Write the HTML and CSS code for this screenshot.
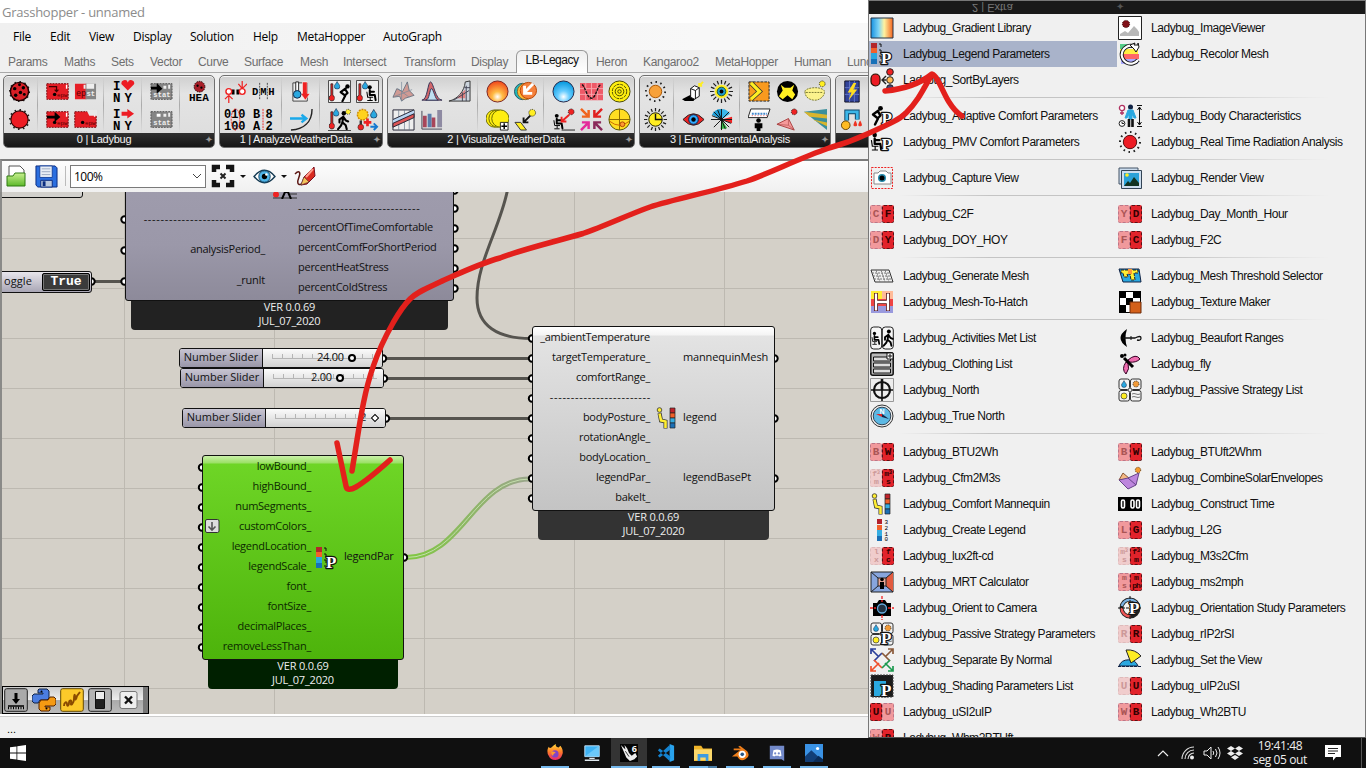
FILE: index.html
```html
<!DOCTYPE html>
<html lang="en">
<head>
<meta charset="utf-8">
<title>Grasshopper - unnamed</title>
<link rel="stylesheet" href="styles.css">
</head>
<body>
<svg class="defs" width="0" height="0">
  <defs>
    <radialGradient id="gOr" cx=".5" cy=".75" r=".7"><stop offset="0" stop-color="#fff"/><stop offset=".35" stop-color="#fb4"/><stop offset="1" stop-color="#f1501f"/></radialGradient>
    <radialGradient id="gBl" cx=".5" cy=".75" r=".7"><stop offset="0" stop-color="#fff"/><stop offset=".4" stop-color="#6cf"/><stop offset="1" stop-color="#0a9be0"/></radialGradient>
    <linearGradient id="gGrad"><stop offset="0" stop-color="#1590e0"/><stop offset=".35" stop-color="#7fd4f5"/><stop offset=".6" stop-color="#fff3a0"/><stop offset="1" stop-color="#f4641e"/></linearGradient>
    <linearGradient id="gWire" gradientUnits="userSpaceOnUse" x1="406" y1="0" x2="530" y2="0"><stop offset="0" stop-color="#80c840"/><stop offset="1" stop-color="#9ba58c"/></linearGradient>
    <linearGradient id="gFox" x1="0" y1="0" x2="0" y2="1"><stop offset="0" stop-color="#ffd83a"/><stop offset=".5" stop-color="#ff7a2a"/><stop offset="1" stop-color="#e8266f"/></linearGradient>
    <linearGradient id="gFolder" x1="0" y1="0" x2="0" y2="1"><stop offset="0" stop-color="#c9f08f"/><stop offset="1" stop-color="#5cb82a"/></linearGradient>
    <symbol id="sun" viewBox="0 0 24 24"><circle cx="12" cy="12" r="10" fill="none" stroke="#222" stroke-width="2" stroke-dasharray="1.6 3.6"/></symbol>
    <symbol id="drop" viewBox="0 0 8 10"><path d="M4 .5C5 3 7.3 4.500 7.300 6.500A3.300 3.100 0 0 1 .7 6.500C.7 4.500 3 3 4 .5Z" fill="#2aa8e0" stroke="#124" stroke-width=".7"/></symbol>
    <symbol id="therm" viewBox="0 0 6 20"><path d="M2 1h2v12a3 3 0 1 1-2 0Z" fill="#e22" stroke="#222" stroke-width=".8"/></symbol>
    <symbol id="walk" viewBox="0 0 14 20"><circle cx="8" cy="2.500" r="2.300"/><path d="M7.500 6L6.500 12L10 15L11 19M6.500 12L5 15.500L2 19M7 6.500L3.500 9V12M8 7L10 10L12.500 11" fill="none" stroke="#000" stroke-width="2.200" stroke-linecap="round"/></symbol>
    <symbol id="bend" viewBox="0 0 14 20"><circle cx="10.500" cy="2.800" r="2.400"/><path d="M8.500 5L3 9L8 13L5 19M8 6L10.500 10L8.500 12" fill="none" stroke="#000" stroke-width="2.400" stroke-linecap="round" stroke-linejoin="round"/></symbol>
    <symbol id="sit" viewBox="0 0 16 20"><circle cx="5" cy="2.600" r="2.400"/><path d="M5 6V12H11L12 18M6 8H10" fill="none" stroke="#000" stroke-width="2.400" stroke-linecap="round" stroke-linejoin="round"/><path d="M1.500 8L2.500 14.500H9M5.500 15V18M2 18.500H8.500" fill="none" stroke="#000" stroke-width="1.200"/></symbol>
    <symbol id="mannequin" viewBox="0 0 24 24"><circle cx="4.500" cy="4" r="2.300" fill="#fe3" stroke="#333" stroke-width=".8"/><path d="M4.500 7L6 14.500L10.500 15.500V22.500" fill="none" stroke="#333" stroke-width="4"/><path d="M4.500 7.500L6 14.500L10.500 15.500V22" fill="none" stroke="#fe3" stroke-width="2.600"/><g stroke="#222" stroke-width=".7"><path fill="#c1222a" d="M15 2h5v5h-5z"/><path fill="#f2602a" d="M15 7h5v5h-5z"/><path fill="#35aee2" d="M15 12h5v5h-5z"/><path fill="#1b6fb5" d="M15 17h5v5h-5z"/></g></symbol>
    <symbol id="legendP" viewBox="0 0 24 24"><path fill="#b3262a" d="M1 1h6v5H1z"/><path fill="#f2602a" d="M1 6h6v5H1z"/><path fill="#29a7df" d="M1 11h6v6H1z"/><path fill="#1670b8" d="M1 17h6v5H1z"/><path d="M9 2h2v3M9 8h2v3M9 14h2v3M9 20h2" stroke="#111" fill="none"/><text x="11" y="21.500" class="glyph-p">P</text></symbol>
    <symbol id="epw" viewBox="0 0 24 24"><path d="M.8 3.800h22.400v16.400H.8z" fill="#e61e26" stroke="#7c0d12" stroke-dasharray="2 1"/><path d="M21.500 5v4" stroke="#fff" stroke-width="1.500"/><circle cx="9" cy="15" r="1.800"/><text x="11.500" y="17.500" class="tiny-mono">epw</text></symbol>
    <symbol id="stat" viewBox="0 0 24 24"><path d="M1 3.800h22v16.400H1z" fill="#858585" stroke="#555" stroke-dasharray="2 1"/><path d="M14 6h3v3h-3zM19 5h2v4h-2z" fill="#eee"/><text x="3.500" y="17.500" class="stat-text">stat</text></symbol>
    <symbol id="grid4" viewBox="0 0 24 24"><g fill="#f4f4f4" stroke="#333"><rect x="1" y="1" width="10.500" height="10.500" rx="2"/><rect x="12.500" y="1" width="10.500" height="10.500" rx="2"/><rect x="1" y="12.500" width="10.500" height="10.500" rx="2"/><rect x="12.500" y="12.500" width="10.500" height="10.500" rx="2"/></g><use href="#drop" x="3" y="2" width="6" height="8"/><circle cx="18" cy="6" r="3" fill="#f19a38" stroke="#333" stroke-dasharray="1 1"/><circle cx="6" cy="18" r="3" fill="#fe2" stroke="#333" stroke-width=".7"/><path d="M14 16q2-1 4 0t4 0M14 19q2-1 4 0t4 0" stroke="#777" fill="none"/></symbol>
  </defs>
</svg>

<main class="screen">
<section class="window">
  <header class="titlebar">Grasshopper - unnamed</header>
  <nav class="menubar">
    <span style="width:37px">File</span><span style="width:39px">Edit</span><span style="width:44px">View</span><span style="width:57px">Display</span><span style="width:63px">Solution</span><span style="width:44px">Help</span><span style="width:86px">MetaHopper</span><span>AutoGraph</span>
  </nav>
  <nav class="tabs">
    <span style="width:56px">Params</span><span style="width:47px">Maths</span><span style="width:39px">Sets</span><span style="width:48px">Vector</span><span style="width:46px">Curve</span><span style="width:56px">Surface</span><span style="width:43px">Mesh</span><span style="width:61px">Intersect</span><span style="width:67px">Transform</span><span style="width:45px">Display</span>
    <b class="tab-on">LB-Legacy</b>
    <span style="width:47px">Heron</span><span style="width:72px">Kangaroo2</span><span style="width:79px">MetaHopper</span><span style="width:53px">Human</span><span>Lunchbox</span>
  </nav>
  <div class="ribbon">
    <section class="panel">
      <div class="panel-body">
        <div class="cells">
          <svg viewBox="0 0 24 24"><use href="#sun" width="24" height="24"/><circle cx="12" cy="12" r="9.500" fill="#d81f26" stroke="#200" stroke-width="1.500"/><circle cx="7" cy="9" r="1.800"/><circle cx="13" cy="13" r="1.800"/><circle cx="16" cy="8" r="1.800"/><circle cx="8" cy="16" r="1.800"/><circle cx="17" cy="15" r="1.500"/><circle cx="12" cy="5" r="1.500"/></svg>
          <svg viewBox="0 0 24 24"><use href="#sun" width="24" height="24"/><circle cx="12" cy="12" r="9" fill="#ed1c24" stroke="#300" stroke-width="1.200"/></svg>
        </div><i class="rule"></i>
        <div class="cells two">
          <svg viewBox="0 0 24 24"><use href="#epw" width="24" height="24"/><path d="M3 7h8v5m-2-2l2 2 2-2" fill="none" stroke="#400" stroke-width="1.300"/></svg>
          <svg viewBox="0 0 24 24"><path d="M1 4h12v16H1z" fill="#e61e26"/><path d="M12 4h11v16H12z" fill="#858585"/><path d="M13 4h8v5h-8zM10 5h2v4h-2z" fill="#eee"/><text x="2" y="17" class="tiny-mono big">ep</text><text x="13" y="17" class="stat-text">st</text></svg>
          <svg viewBox="0 0 24 24"><use href="#epw" width="24" height="24"/><path d="M1 8h8V4l6 5.500-6 5V11H1z"/></svg>
          <svg viewBox="0 0 24 24"><use href="#epw" width="24" height="24"/><path d="M13 2h11v6H16z" fill="#e8e8e8"/></svg>
        </div><i class="rule"></i>
        <div class="cells">
          <svg viewBox="0 0 24 24"><text x="1" y="10" class="slab">I</text><path d="M16.500 11L10 4.500A3.300 3.300 0 0 1 16.500 2.500A3.300 3.300 0 0 1 23 4.500Z" fill="#ed1c24"/><text x="1" y="22.500" class="slab">N</text><text x="13" y="22.500" class="slab">Y</text></svg>
          <svg viewBox="0 0 24 24"><text x="1" y="10" class="slab">I</text><path d="M10 4h6V1l7 5-7 5V8h-6z" fill="#ed1c24"/><text x="1" y="22.500" class="slab">N</text><text x="13" y="22.500" class="slab">Y</text></svg>
        </div><i class="rule"></i>
        <div class="cells">
          <svg viewBox="0 0 24 24"><use href="#stat" width="24" height="24"/><path d="M1 7h6V3l6 6-6 5v-4H1z"/></svg>
          <svg viewBox="0 0 24 24"><use href="#stat" width="24" height="24"/><path d="M7 6h4v3H7z" fill="#fff"/></svg>
        </div><i class="rule"></i>
        <div class="cells">
          <svg viewBox="0 0 24 24"><circle cx="12" cy="7" r="5.600" fill="#a81e28" stroke="#200" stroke-dasharray="1.500 1"/><circle cx="10" cy="6" r="1.200"/><circle cx="14" cy="8" r="1.200"/><text x="1" y="22" class="slab small">HEA</text></svg>
        </div>
      </div>
      <footer>0 | Ladybug<em>✦</em></footer>
    </section>
    <section class="panel">
      <div class="panel-body">
        <div class="cells two">
          <svg viewBox="0 0 24 24"><path d="M8 10h3v5H8zM13 10h3v5h-3z"/><circle cx="5" cy="12" r="3" fill="#fff" stroke="#e22" stroke-width="1.500"/><circle cx="19" cy="12" r="3" fill="#fff" stroke="#e22" stroke-width="1.500"/><path d="M5 16v8M5 16l-4 4M5 16l4 4M19 9V1M19 9l-4-5M19 9l5-5" stroke="#e22" fill="none" stroke-width="1.300"/></svg>
          <svg viewBox="0 0 24 24"><text x="0" y="16" class="slab mid">D</text><text x="8.500" y="16" class="slab mid">M</text><text x="17" y="16" class="slab mid">H</text><path d="M8 3v18M16 3v18" stroke="#222" stroke-width=".8" stroke-dasharray="2 1"/></svg>
          <svg viewBox="0 0 24 24"><text x="0" y="10.500" class="slab dig">010</text><text x="0" y="22.500" class="slab dig">100</text><ellipse cx="12" cy="12" rx="4.500" ry="11" fill="none" stroke="#e22" stroke-dasharray="2 1"/></svg>
          <svg viewBox="0 0 24 24"><text x="1" y="10.500" class="slab dig">B</text><text x="14" y="10.500" class="slab dig">8</text><text x="1" y="22.500" class="slab dig">A</text><text x="14" y="22.500" class="slab dig">2</text><path d="M11.500 1v22" stroke="#e22" stroke-dasharray="2 1"/></svg>
        </div><i class="rule"></i>
        <div class="cells">
          <svg viewBox="0 0 24 24"><path d="M3 3h15v19H3z" fill="#eee" stroke="#444"/><path d="M13 2h5v12h3l-5 7-5-7h2z" fill="#e22" stroke="#fff" stroke-width=".6"/><path d="M6 2h3v10H6z" fill="#fff" stroke="#222"/><circle cx="7.500" cy="15" r="4" fill="#2aa8e0" stroke="#124"/></svg>
          <svg viewBox="0 0 24 24"><path d="M0 11h15M12 7l5 4-5 4" stroke="#1ba9ea" stroke-width="2.500" fill="none"/><path d="M1 23C14 22 23 15 23 1" stroke="#222" stroke-width="1.500" fill="none"/></svg>
        </div><i class="rule"></i>
        <div class="cells two">
          <svg viewBox="0 0 24 24"><path d="M.5.500h23v23H.5z" fill="#eee" stroke="#444"/><use href="#therm" x="1" y="3" width="6" height="20"/><use href="#drop" x="6" y="1" width="7" height="9"/><use href="#bend" x="10" y="4" width="14" height="19"/></svg>
          <svg viewBox="0 0 24 24"><path d="M.5.500h23v23H.5z" fill="#eee" stroke="#444"/><use href="#therm" x="1" y="3" width="6" height="20"/><use href="#drop" x="6" y="1" width="7" height="9"/><use href="#sit" x="10" y="5" width="14" height="18"/></svg>
          <svg viewBox="0 0 24 24"><path d="M0 23.500h24" stroke="#444"/><use href="#therm" x="1" y="3" width="6" height="20"/><use href="#drop" x="5" y="0" width="7" height="9"/><circle cx="21" cy="4" r="2.600" fill="#fe3" stroke="#333" stroke-dasharray="1 1"/><use href="#walk" x="8" y="3" width="15" height="20"/></svg>
          <svg viewBox="0 0 24 24"><circle cx="7" cy="7" r="5.500" fill="#ffd21e" stroke="#c80" stroke-width="1.500" stroke-dasharray="2 1"/><use href="#drop" x="14" y="1" width="9" height="10"/><path d="M12 11v8M8 15h8" stroke="#e22" stroke-width="2.800"/><path d="M5 13v6" stroke="#333" stroke-width="2.500"/><circle cx="5" cy="20" r="3" fill="#e22" stroke="#333" stroke-width=".6"/><path d="M15 19.500h6m-2.500-3.500l3.500 3.500-3.500 3.500" stroke="#1578d0" stroke-width="2" fill="none"/></svg>
        </div>
      </div>
      <footer>1 | AnalyzeWeatherData<em>✦</em></footer>
    </section>
    <section class="panel">
      <div class="panel-body">
        <div class="cells three">
          <svg viewBox="0 0 24 24"><path d="M1 18L5 9l6 3 5-10 2 9 5 5-9 3-4 3-2-5z" fill="#cf9a94" stroke="#567" stroke-width=".8"/><path d="M10 2v20M3 17l18-7M6 9l12 9" stroke="#789" stroke-width=".7"/></svg>
          <svg viewBox="0 0 24 24"><path d="M2 21C8 21 8 2 11 2S16 21 23 21z" fill="#d2666a" stroke="#335"/><path d="M6 21C10 21 10 9 12 9S16 21 19 21z" fill="#bfe0f2" stroke="#335"/></svg>
          <svg viewBox="0 0 24 24"><path d="M1 22C10 20 17 12 18 2L23 1V22Z" fill="#ccd4dd" stroke="#333"/><path d="M9 19l9-9v9z" fill="#e08080"/><path d="M15 13v9M19 6v16M6 21l16-10M17 8h6" stroke="#445"/></svg>
          <svg viewBox="0 0 24 24"><path d="M1 2h22v21H1z" fill="#eee" stroke="#223"/><path d="M7 2v21M13 2v21M18 2v21" stroke="#678" stroke-width=".7"/><path d="M1 12L23 2v4L1 16z" fill="#b9d4f0"/><path d="M1 16L23 6v4L1 20z" fill="#d55" stroke="#223"/><path d="M1 12L23 2" stroke="#223"/></svg>
          <svg viewBox="0 0 24 24"><path d="M2 3v19h21" stroke="#445" fill="none"/><path fill="#a8455a" d="M3 8h4v12H3zM12 10h4v10h-4z"/><path fill="#5b7dab" d="M8 6h4v14H8z"/><path fill="#8e8aa2" d="M18 2h5v18h-5z"/></svg>
        </div><i class="rule"></i>
        <div class="cells two">
          <svg viewBox="0 0 24 24"><circle cx="12" cy="12" r="11" fill="url(#gOr)" stroke="#722"/></svg>
          <svg viewBox="0 0 24 24"><circle cx="9" cy="12" r="8.500" fill="#2bb" stroke="#256"/><circle cx="12" cy="12" r="8.500" fill="#fb3" stroke="#863"/><circle cx="15" cy="11" r="8.500" fill="#f4803c" stroke="#b40"/><path d="M20 4L12 12M11 6v8h8" stroke="#fff" stroke-width="3" fill="none"/></svg>
          <svg viewBox="0 0 24 24"><g fill="#fe1" stroke="#660"><circle cx="9" cy="11" r="9"/><circle cx="12" cy="11" r="9"/><circle cx="15" cy="11" r="9"/></g><path d="M15 15h8v8h-8z" fill="#fff" stroke="#222"/><path d="M19 16v6M16 19h6" stroke="#000" stroke-width="1.500"/></svg>
          <svg viewBox="0 0 24 24"><path d="M1 15h6l6 8H7z" fill="#fe2" stroke="#333"/><circle cx="19" cy="5" r="3.500" fill="#fe2" stroke="#222" stroke-dasharray="1 1"/><path d="M17 8l-7 7m0-5v5h5" stroke="#111" stroke-width="2" fill="none"/></svg>
        </div><i class="rule"></i>
        <div class="cells three">
          <svg viewBox="0 0 24 24"><circle cx="12" cy="12" r="11" fill="url(#gBl)" stroke="#224"/></svg>
          <svg viewBox="0 0 24 24"><path d="M0 3h24v18H0z" fill="#ee5a68"/><path d="M0 9h24M0 15h24M6 3v18M12 3v18M18 3v18" stroke="#f9a3aa"/><path d="M2 5c3 0 5 14 10 14s6-14 10-14" fill="none" stroke="#111" stroke-width="1.400" stroke-dasharray="3 1"/></svg>
          <svg viewBox="0 0 24 24"><circle cx="12" cy="12" r="11" fill="#fe1" stroke="#440"/><circle cx="12" cy="12" r="7.500" fill="none" stroke="#440" stroke-dasharray="3 1"/><circle cx="12" cy="12" r="4.500" fill="none" stroke="#440"/><circle cx="12" cy="12" r="1.800" fill="none" stroke="#440"/></svg>
          <svg viewBox="0 0 24 24"><use href="#sit" x="0" y="6" width="15" height="17"/><path d="M18 7l-8 7m0-5v5h5" stroke="#e22" stroke-width="2" fill="none"/><circle cx="20" cy="4" r="3" fill="#e22" stroke="#222" stroke-dasharray="1 1"/><path d="M10 23h14" stroke="#222"/></svg>
          <svg viewBox="0 0 24 24"><g fill="none" stroke-width="2.600"><path d="M1 1l8 8M2 9h7V2" stroke="#f0641e"/><path d="M23 1l-8 8M15 2v7h7" stroke="#e02020"/><path d="M1 23l8-8M2 15h7v7" stroke="#e42a9a"/><path d="M23 23l-8-8M15 22v-7h7" stroke="#8a2a5a"/></g></svg>
          <svg viewBox="0 0 24 24"><circle cx="12" cy="12" r="11" fill="#fd2" stroke="#550"/><path d="M12 1v22M1 12h22" stroke="#860"/><path d="M2 14q10 8 20 0" fill="none" stroke="#c60"/><circle cx="15" cy="17" r="2.500" fill="#f93" stroke="#a40"/></svg>
        </div>
      </div>
      <footer>2 | VisualizeWeatherData<em>✦</em></footer>
    </section>
    <section class="panel">
      <div class="panel-body">
        <div class="cells">
          <svg viewBox="0 0 24 24"><use href="#sun" width="24" height="24"/><circle cx="12" cy="12" r="6.500" fill="#f7a13a" stroke="#a50"/></svg>
          <svg viewBox="0 0 24 24"><g stroke="#222" stroke-width="1.300"><path d="M12 0v24M0 12h24M3.500 3.500l17 17M20.500 3.500l-17 17M7.500 1l9 22M16.500 1l-9 22M1 7.500l22 9M1 16.500l22-9"/></g><circle cx="12" cy="12" r="8.500" fill="#dcdcdc"/><circle cx="12" cy="12" r="7" fill="#fe2" stroke="#220"/><path d="M12 6v6h7" stroke="#111" stroke-width="1.500" fill="none"/></svg>
        </div><i class="rule"></i>
        <div class="cells two">
          <svg viewBox="0 0 24 24"><path d="M0 20l8-4h8l-4 6H3z"/><path d="M9 9l4-3 5 2v9l-5 3-4-2zM9 9l5 2v9M14 11l4-3" fill="#fff" stroke="#111"/><path d="M22 2l-4 4m0-3v3h3" stroke="#fe2" stroke-width="2" fill="none"/></svg>
          <svg viewBox="0 0 24 24"><g stroke="#222" stroke-width="1.300"><path d="M12 0v24M0 12h24M3.500 3.500l17 17M20.500 3.500l-17 17M7.500 1l9 22M16.500 1l-9 22M1 7.500l22 9M1 16.500l22-9"/></g><circle cx="12" cy="12" r="7.500" fill="#fe2" stroke="#dcdcdc"/><circle cx="12" cy="12" r="4.500" fill="#1b9ad0" stroke="#252"/><circle cx="12" cy="12" r="2"/></svg>
          <svg viewBox="0 0 24 24"><path d="M1 12Q12 0 23 12Q12 24 1 12z" fill="#e22" stroke="#222"/><circle cx="12" cy="12" r="5" fill="#3af" stroke="#024"/><circle cx="12" cy="12" r="2.300"/></svg>
          <svg viewBox="0 0 24 24"><path d="M12 12L2 7A11 11 0 0 1 12 1z" fill="#1e9fd8"/><path d="M12 12V1a11 11 0 0 1 9 5z" fill="#3bb6e8"/><path d="M12 12l11-3v7z" fill="#e22"/><path d="M12 12l6 9-7 1z" fill="#3b4"/><path d="M12 1v22M1 12h22M4 4l16 16M20 4L4 20M8 2l8 20M2 8l20 8" stroke="#111" stroke-width="1"/></svg>
        </div><i class="rule"></i>
        <div class="cells three">
          <svg viewBox="0 0 24 24"><path d="M1 2h21v20H1z" fill="#f99a1e" stroke="#222" stroke-dasharray="3 1"/><path d="M3 3l9 9-9 8" fill="none" stroke="#333" stroke-width="5"/><path d="M3 3l9 9-9 8" fill="none" stroke="#fe2" stroke-width="3.400"/></svg>
          <svg viewBox="0 0 24 24"><circle cx="12" cy="12" r="11"/><path d="M5 5l4 3h6l4-3-2 6 3 4-3 5-5-4-5 4-4-3 4-6z" fill="#fe2"/></svg>
          <svg viewBox="0 0 24 24"><path d="M1 12c0-4 16-6 20-1 2 4-4 11-11 10S1 16 1 12z" fill="#fbf28c" stroke="#773" stroke-dasharray="2 1"/><path d="M2 13h18" stroke="#773" stroke-dasharray="2 1"/><circle cx="19" cy="4" r="3" fill="#fe2" stroke="#222" stroke-dasharray="1 1"/></svg>
          <svg viewBox="0 0 24 24"><path d="M3 1h20l-3 9H0z" fill="#fff" stroke="#222"/><path d="M4 6h16" stroke="#48c" stroke-dasharray="2 1" stroke-width="2"/><path d="M4 8h16" stroke="#e55" stroke-dasharray="1 2"/><circle cx="11" cy="13" r="2.400"/><path d="M7 16h8v5h-2v3H9v-3H7z"/></svg>
          <svg viewBox="0 0 24 24"><path d="M1 17L13 11l6 12z" fill="#f59a9a" stroke="#a44"/><path d="M1 17l12 1v-7M13 18l6 5" stroke="#a44" stroke-width=".6" fill="none"/><circle cx="19" cy="4" r="3" fill="#e22" stroke="#222" stroke-dasharray="1 1"/></svg>
          <svg viewBox="0 0 24 24"><path d="M0 4L24 1V23z" fill="#3b8f9c"/><path d="M0 4l24 3v4L6 9zM9 12l15 3v4z" fill="#d9b52e"/></svg>
        </div>
      </div>
      <footer>3 | EnvironmentalAnalysis<em>✦</em></footer>
    </section>
    <section class="panel cut">
      <div class="panel-body">
        <div class="cells">
          <svg viewBox="0 0 24 24"><path d="M5 1h15v22H5z" fill="#33449a" stroke="#112"/><path d="M10 1v22M15 1v22M5 8h15M5 15h15" stroke="#6477c8"/><path d="M14 3L8 13h4l-3 8 9-11h-4l3-7z" fill="#fd2"/></svg>
          <svg viewBox="0 0 24 24"><path d="M7 13V4h11v8" fill="none" stroke="#146" stroke-width="5"/><path d="M7 13V4h11v8" fill="none" stroke="#3bb6e8" stroke-width="3"/><circle cx="6" cy="18" r="4.500" fill="#fb2" stroke="#640"/><path d="M16 13c3 5 2 6 0 6s-3-1 0-6M21 13c3 5 2 6 0 6s-3-1 0-6" fill="#e32"/></svg>
        </div>
      </div>
      <footer></footer>
    </section>
  </div>
  <div class="toolbar">
    <svg class="tool-open" viewBox="0 0 20 24"><path d="M3 2h11l4 4v8H3z" fill="#fff" stroke="#555"/><path d="M1 12h6l2-3h10v13H1z" fill="url(#gFolder)" stroke="#2f7a12"/></svg>
    <svg class="tool-save" viewBox="0 0 24 24"><path d="M1 1h20l2 2v20H3l-2-2z" fill="#2b6fe0" stroke="#0a2c80"/><path d="M5 1h13v12H5z" fill="#e9eef5" stroke="#1744a0"/><path d="M7 4h9M7 7h9M7 10h9" stroke="#9aa8c0"/><path d="M6 16h12v7H6z" fill="#b9c7de" stroke="#0a2c80"/><path d="M8 17h3v5H8z" fill="#0a2c80"/></svg>
    <i class="tool-rule"></i>
    <div class="zoom-box"><span>100%</span><svg viewBox="0 0 10 6"><path d="M1 1l4 4 4-4" fill="none" stroke="#444"/></svg></div>
    <svg class="tool-fit" viewBox="0 0 24 24"><path d="M3 8V3h6M15 3h6v5M21 16v5h-6M9 21H3v-5" fill="none" stroke="#151515" stroke-width="4.500"/><path d="M9.500 9.500l5 5M14.500 9.500l-5 5" stroke="#222" stroke-width="2"/></svg>
    <i class="caret"></i>
    <svg class="tool-eye" viewBox="0 0 24 20"><path d="M1 10Q12-3 23 10Q12 23 1 10z" fill="#fff" stroke="#143a52" stroke-width="1.500"/><circle cx="12" cy="10" r="6" fill="#4fb4e8" stroke="#0d4468"/><circle cx="12" cy="10" r="2.800"/><circle cx="14" cy="8" r="1.300" fill="#fff"/></svg>
    <i class="caret"></i>
    <svg class="tool-pen" viewBox="0 0 22 22"><path d="M1 9c4-4 6-2 4 3s-2 9 3 7" fill="none" stroke="#5b1612" stroke-width="1.500"/><path d="M7 20l3-8L20 2l1 9-8 8z" fill="#d92b20" stroke="#712"/><path d="M12 12l7-8" stroke="#ff9b8a" stroke-width="2"/><path d="M7 20l3-8 5 5z" fill="#f5c35b" stroke="#533" stroke-width=".6"/></svg>
  </div>

  <div class="canvas">
    <svg class="wires" viewBox="0 192 868 522">
      <g class="wire">
        <path d="M92 281.500H123M384 358.500H530M385 378.500H530M387 418.500H530"/>
        <path d="M507.500 190C500 228 477 262 477 298C477 326 498 338.500 531 338.500"/>
      </g>
      <path d="M406 557.500C462 557.500 474 479 530 479" fill="none" stroke="url(#gWire)" stroke-width="5"/>
      <path d="M406 557.500C462 557.500 474 479 530 479" fill="none" stroke="#c5e0ad" stroke-width="1"/>
      <g class="ports">
        <circle cx="124.500" cy="219.500" r="3.200"/><circle cx="124.500" cy="250.500" r="3.200"/><circle cx="124.500" cy="281.500" r="3.200"/><circle cx="91.500" cy="281.500" r="3.200"/>
        <circle cx="454.500" cy="190.500" r="3.200"/><circle cx="454.500" cy="208.500" r="3.200"/><circle cx="454.500" cy="228.500" r="3.200"/><circle cx="454.500" cy="248.500" r="3.200"/><circle cx="454.500" cy="268.500" r="3.200"/><circle cx="454.500" cy="288.500" r="3.200"/>
        <circle cx="383" cy="358.500" r="3.200"/><circle cx="384" cy="378.500" r="3.200"/><circle cx="386" cy="418.500" r="3.200"/>
        <circle cx="532" cy="338.500" r="3.200"/><circle cx="532" cy="358.500" r="3.200"/><circle cx="532" cy="378.500" r="3.200"/><circle cx="532" cy="398.500" r="3.200"/><circle cx="532" cy="418.500" r="3.200"/><circle cx="532" cy="438.500" r="3.200"/><circle cx="532" cy="458.500" r="3.200"/><circle cx="532" cy="478.500" r="3.200"/><circle cx="532" cy="498.500" r="3.200"/>
        <circle cx="774.500" cy="358.500" r="3.200"/><circle cx="774.500" cy="418.500" r="3.200"/><circle cx="774.500" cy="478.500" r="3.200"/>
        <circle cx="202" cy="467.500" r="3.200"/><circle cx="202" cy="487.500" r="3.200"/><circle cx="202" cy="507.500" r="3.200"/><circle cx="202" cy="527.500" r="3.200"/><circle cx="202" cy="547.500" r="3.200"/><circle cx="202" cy="567.500" r="3.200"/><circle cx="202" cy="587.500" r="3.200"/><circle cx="202" cy="607.500" r="3.200"/><circle cx="202" cy="627.500" r="3.200"/><circle cx="202" cy="647.500" r="3.200"/>
        <circle cx="404" cy="557.500" r="3.200"/>
      </g>
    </svg>

    <article class="node stub"></article>
    <article class="node toggle"><span>oggle</span><b>True</b></article>

    <article class="node comfort">
      <div class="inputs"><p class="dash">-----------------------------</p><p>analysisPeriod_</p><p>_runIt</p></div>
      <svg class="half-icon" viewBox="0 0 24 7"><circle cx="3" cy="2.500" r="3" fill="#e22"/><path d="M0 6h24M17 2h7" stroke="#333"/><path d="M9 7l3-7h3l3 7" fill="none" stroke="#000" stroke-width="2"/></svg>
      <div class="outputs"><p class="dash">-----------------------------</p><p>percentOfTimeComfortable</p><p>percentComfForShortPeriod</p><p>percentHeatStress</p><p>percentColdStress</p></div>
    </article>
    <footer class="ver ver-comfort">VER 0.0.69<br>JUL_07_2020</footer>

    <article class="node slider s1"><b>Number Slider</b><div class="track"><span>24.00</span><i class="knob"></i></div></article>
    <article class="node slider s2"><b>Number Slider</b><div class="track"><span>2.00</span><i class="knob"></i></div></article>
    <article class="node slider s3"><b>Number Slider</b><div class="track"><span>2</span><i class="knob diamond"></i></div></article>

    <article class="node mannequin">
      <div class="inputs"><p>_ambientTemperature</p><p>targetTemperature_</p><p>comfortRange_</p><p class="dash">------------------------</p><p>bodyPosture_</p><p>rotationAngle_</p><p>bodyLocation_</p><p>legendPar_</p><p>bakeIt_</p></div>
      <svg class="node-icon" viewBox="0 0 24 24"><use href="#mannequin" width="24" height="24"/></svg>
      <div class="outputs"><p>mannequinMesh</p><p>legend</p><p>legendBasePt</p></div>
    </article>
    <footer class="ver ver-mannequin">VER 0.0.69<br>JUL_07_2020</footer>

    <article class="node legend">
      <div class="inputs"><p>lowBound_</p><p>highBound_</p><p>numSegments_</p><p>customColors_</p><p>legendLocation_</p><p>legendScale_</p><p>font_</p><p>fontSize_</p><p>decimalPlaces_</p><p>removeLessThan_</p></div>
      <svg class="node-icon" viewBox="0 0 24 24"><use href="#legendP" width="24" height="24"/></svg>
      <div class="outputs"><p>legendPar</p></div>
      <svg class="flatten" viewBox="0 0 15 15"><rect x=".5" y=".5" width="13.500" height="13" rx="1.500" fill="#ddd" stroke="#333"/><path d="M7 3v8M3.500 7.500L7 11l3.500-3.500" fill="none" stroke="#555" stroke-width="1.600"/></svg>
    </article>
    <footer class="ver ver-legend">VER 0.0.69<br>JUL_07_2020</footer>

    <div class="palette">
      <svg viewBox="0 0 24 24"><rect x=".7" y=".7" width="22.600" height="22.600" rx="2" fill="#aaa" stroke="#222"/><path d="M12 5v6" stroke="#000" stroke-width="3"/><path d="M8 11h8l-4 5z"/><path d="M4 18h16" stroke="#000" stroke-width="1.500"/><path d="M4 20h17" stroke="#000" stroke-width="2.500" stroke-dasharray="1 1.500"/></svg>
      <svg viewBox="0 0 24 24"><path d="M7 1h8l2 2v7l-2 2H8l-2 3H2L0 13V8l2-2h9V5H6V2z" fill="#4b7de0" stroke="#124"/><path d="M17 23H9l-2-2v-6l2-3h7l2-3h4l2 2v5l-2 2h-9v1h5v3z" fill="#f59a13" stroke="#520"/><circle cx="9.500" cy="3.500" r="1"/><circle cx="14.500" cy="20.500" r="1"/></svg>
      <svg viewBox="0 0 24 24"><rect x=".7" y=".7" width="22.600" height="22.600" rx="2" fill="#fcc92a" stroke="#664a00"/><path d="M4 18c0-4 3-5 3-2s2 2 2-1 3-4 2 0 3 0 3-4 1-6 1-2 1 3 2-1l3-4" fill="none" stroke="#8a4b00" stroke-width="1.900"/></svg>
      <svg viewBox="0 0 24 24"><rect x=".7" y=".7" width="22.600" height="22.600" rx="2" fill="#b5b5b5" stroke="#222"/><path d="M7.500 3.500h9v17h-9z" fill="#eee" stroke="#111"/><path d="M8 11h8v9H8z" fill="#222"/></svg>
      <svg viewBox="0 0 24 24"><rect x="4" y="3.500" width="17" height="17" rx="2" fill="#eee" stroke="#777"/><path d="M9 8.500l7 7M16 8.500l-7 7" stroke="#111" stroke-width="2.400"/></svg>
    </div>
  </div>
  <div class="status">...</div>
</section>

<aside class="popup">
  <header><span>2 | Extra</span><em>✦</em></header>
  <div class="group">
    <p><svg viewBox="0 0 24 24"><path d="M1 2h22v20H1z" fill="url(#gGrad)" stroke="#234"/></svg>Ladybug_Gradient Library</p>
    <p><svg viewBox="0 0 24 24"><path d="M.5.500h23v23H.5z" fill="#fff" stroke="#222"/><circle cx="8" cy="8" r="3.600" fill="#801018" stroke="#300" stroke-dasharray="1 1"/><path d="M2 20v-2l5-3 3 2 6-7 3 3 2 3v4z" fill="#b8b8b8"/></svg>Ladybug_ImageViewer</p>
    <p class="hot"><svg viewBox="0 0 24 24"><use href="#legendP" width="24" height="24"/></svg>Ladybug_Legend Parameters</p>
    <p><svg viewBox="0 0 24 24"><path fill="#5c8" d="M2 2h7v6H2z"/><path fill="#fe4" d="M2 7h18v6H2z"/><path fill="#f66" d="M4 12h17v5H4z"/><path fill="#aaf" d="M3 17h17v5H3z"/><path d="M20 18A9 9 0 1 1 15 4" fill="none" stroke="#111" stroke-width="4"/><path d="M20 18A9 9 0 1 1 15 4" fill="none" stroke="#fff" stroke-width="2.200"/><path d="M12 3l5-2-1 2h4V1l1 4-3 5-2-3z" fill="#fff" stroke="#111"/></svg>Ladybug_Recolor Mesh</p>
    <p><svg viewBox="0 0 24 24"><rect x="1" y="6" width="9" height="12" rx="4.500" fill="#ed1c24" stroke="#210" stroke-width="1.200"/><path d="M16 8l-4 4 4 4M12 12h4" stroke="#222" stroke-width="1.400" fill="none"/><circle cx="20" cy="4" r="3.300" fill="#e22" stroke="#222"/><circle cx="20" cy="12" r="3.300" fill="#fb5" stroke="#222"/><circle cx="20" cy="20" r="3.300" fill="#447" stroke="#222"/></svg>Ladybug_SortByLayers</p>
  </div>
  <div class="group">
    <p><svg viewBox="0 0 24 24"><use href="#bend" x="0" y="0" width="14" height="23"/><text x="11.500" y="20" class="glyph-p">P</text></svg>Ladybug_Adaptive Comfort Parameters</p>
    <p><svg viewBox="0 0 24 24"><circle cx="12.500" cy="3" r="2.500" fill="#124"/><path d="M10 6h5l3 8h-2l-2-4v5h-3v-5l-2 4H7z" fill="#29a7df" stroke="#29a7df"/><path d="M11 15v8M14.500 15v8" stroke="#111" stroke-width="2.600"/><path d="M19 1.500h5M19 22.500h5M21.500 3v18M19.500 6l2-3 2 3M19.500 18l2 3 2-3" stroke="#111" fill="none"/><circle cx="4" cy="4" r="2.600" fill="#fff" stroke="#b03060" stroke-width="1.300"/><path d="M4 7v4M2 9h4" stroke="#b03060" stroke-width="1.300"/><circle cx="4" cy="19.500" r="2.900" fill="#fff" stroke="#222"/><path d="M4 18v1.500h2" stroke="#222" fill="none"/></svg>Ladybug_Body Characteristics</p>
    <p><svg viewBox="0 0 24 24"><use href="#sit" x="0" y="1" width="15" height="22"/><text x="11.500" y="20" class="glyph-p">P</text></svg>Ladybug_PMV Comfort Parameters</p>
    <p><svg viewBox="0 0 24 24"><use href="#sun" width="24" height="24"/><circle cx="12" cy="12" r="6.700" fill="#ed1c24" stroke="#511"/></svg>Ladybug_Real Time Radiation Analysis</p>
  </div>
  <div class="group">
    <p><svg viewBox="0 0 24 24"><path d="M1.500 1.500h21v21h-21z" fill="none" stroke="#e22" stroke-dasharray="2 1.200"/><path d="M4 7h4l2-2h6l2 2h3v11H4z" fill="#fff" stroke="#888"/><circle cx="12" cy="12" r="4" fill="#28a"/><circle cx="12" cy="12" r="2.500"/></svg>Ladybug_Capture View</p>
    <p><svg viewBox="0 0 24 24"><path d="M1 2h19v16H1z" fill="#cde" stroke="#456"/><path d="M3.500 4.500h20v18h-20z" fill="#cde" stroke="#345"/><path d="M6 7h15v13H6z" fill="#2aa2d8"/><path d="M6 20l4-5 2 2 4-6 5 6v3z" fill="#132"/><circle cx="9" cy="9" r="1.800" fill="#fe2"/></svg>Ladybug_Render View</p>
  </div>
  <div class="group">
    <p><span class="conv"><i>C</i><b>F</b></span>Ladybug_C2F</p>
    <p><span class="conv"><i>Y</i><b>D</b></span>Ladybug_Day_Month_Hour</p>
    <p><span class="conv"><i>D</i><b>Y</b></span>Ladybug_DOY_HOY</p>
    <p><span class="conv"><i>F</i><b>C</b></span>Ladybug_F2C</p>
  </div>
  <div class="group">
    <p><svg viewBox="0 0 24 24"><path d="M1 6h18l4 12H5z" fill="#eee" stroke="#333"/><path d="M2 9h18M3 12h18M4 15h18M6 6l4 12M11 6l4 12M15 6l4 12" stroke="#777" stroke-dasharray="2 1"/></svg>Ladybug_Generate Mesh</p>
    <p><svg viewBox="0 0 24 24"><path d="M1 5h20l2 13H5z" fill="#2aa8e0" stroke="#124"/><path d="M3 6h17v3h-4l1 7h-4l-1-6H9l1 3H6L5 9H3z" fill="#fe3" stroke="#222" stroke-dasharray="3 1"/><path d="M10 5h4v5h-4z" fill="#f93"/></svg>Ladybug_Mesh Threshold Selector</p>
    <p><svg viewBox="0 0 24 24"><path fill="#fe3" d="M1 1h11v8H1z"/><path fill="#fb9" d="M12 1h11v8H12z"/><path fill="#e44" d="M1 9h22v7H1z"/><path fill="#99d" d="M1 16h22v7H1z"/><path d="M6 3v18M18 3v18M6 12h12" stroke="#511" stroke-width="4"/><path d="M6 3.500v17M18 3.500v17M6 12h12" stroke="#fff" stroke-width="2.400"/></svg>Ladybug_Mesh-To-Hatch</p>
    <p><svg viewBox="0 0 24 24"><path d="M1 1h22v22H1z"/><path d="M8 2h7v6H8zM2 8h6v7H2zM15 8h7v5h-7zM8 15h4v7H8z" fill="#fff"/><path d="M12 12h11v11H12z" fill="#d4601a" stroke="#6d2a08"/></svg>Ladybug_Texture Maker</p>
  </div>
  <div class="group">
    <p><svg viewBox="0 0 24 24"><rect x=".7" y="1" width="11" height="22" rx="3" fill="#f6f6f6" stroke="#222"/><rect x="12.300" y="1" width="11" height="22" rx="3" fill="#f6f6f6" stroke="#222"/><use href="#sit" x="1" y="5" width="11" height="15"/><use href="#walk" x="12" y="3" width="12" height="18"/></svg>Ladybug_Activities Met List</p>
    <p><svg viewBox="0 0 24 24"><path d="M9 3Q-4 12 9 21Q6 12 9 3z"/><path d="M5 12h12q6-3 6 0t-4 2" stroke="#111" stroke-width="1.300" fill="none"/><path d="M13 10v4" stroke="#111"/></svg>Ladybug_Beaufort Ranges</p>
    <p><svg viewBox="0 0 24 24"><rect x=".8" y=".8" width="22.400" height="22.400" rx="2" fill="#b9b9b9" stroke="#111" stroke-width="1.500"/><path d="M3.500 5h17v4h-17zM3.500 11h17v4h-17zM3.500 17h17v4h-17z" fill="#ddd" stroke="#111"/><path d="M17 1h6v6h-6z" fill="#fff" stroke="#111"/><path d="M20 2v4M18 4h4" stroke="#111"/></svg>Ladybug_Clothing List</p>
    <p><svg viewBox="0 0 24 24"><path d="M10 8Q18 1 22 7Q18 11 11 10z" fill="#ee6cae" stroke="#302"/><path d="M8 10Q3 17 8 22Q12 17 10 11z" fill="#ee6cae" stroke="#302"/><path d="M6 6l9 9" stroke="#000" stroke-width="3"/><circle cx="4" cy="4" r="2"/><circle cx="7" cy="3" r="1.500"/></svg>Ladybug_fly</p>
    <p><svg viewBox="0 0 24 24"><path d="M.5.500h23v23H.5z" fill="#eee" stroke="#999"/><circle cx="12" cy="12" r="8" fill="none" stroke="#111" stroke-width="2.200"/><path d="M12 1v22M1 12h22" stroke="#111" stroke-width="1.600"/><path d="M12 1v11" stroke="#111" stroke-width="2.600"/></svg>Ladybug_North</p>
    <p><svg viewBox="0 0 24 24"><use href="#grid4" width="24" height="24"/></svg>Ladybug_Passive Strategy List</p>
    <p><svg viewBox="0 0 24 24"><circle cx="12" cy="12" r="11" fill="#eee" stroke="#333"/><circle cx="12" cy="12" r="8.800" fill="#5db9e4" stroke="#345"/><path d="M6 10l6 0 0 3z" fill="#d22"/><path d="M12 10l7 5-7-2z" fill="#124"/><text x="9.500" y="10" class="compass-n">N</text></svg>Ladybug_True North</p>
  </div>
  <div class="group">
    <p><span class="conv"><i>B</i><b>W</b></span>Ladybug_BTU2Wh</p>
    <p><span class="conv"><i>B</i><b>W</b></span>Ladybug_BTUft2Whm</p>
    <p><span class="conv pale"><i class="stack">f³<br>m</i><b class="stack">m³<br>s</b></span>Ladybug_Cfm2M3s</p>
    <p><svg viewBox="0 0 24 24"><path d="M1 14L5 7l7 6z" fill="#f5b883" stroke="#853"/><path d="M1 14l9-2 11-5-3 12-8 4z" fill="#bd86dd" stroke="#648"/><path d="M10 12l8 7" stroke="#648"/><circle cx="20" cy="4" r="2.700" fill="#f49a2e" stroke="#531" stroke-dasharray="1 1"/></svg>Ladybug_CombineSolarEnvelopes</p>
    <p><svg viewBox="0 0 24 24"><use href="#mannequin" width="24" height="24"/></svg>Ladybug_Comfort Mannequin</p>
    <p><svg viewBox="0 0 24 24"><path d="M0 5h24v14H0z"/><g fill="none" stroke="#fff" stroke-width="1.600"><rect x="3.500" y="8" width="3" height="8" rx="1.500"/><rect x="13" y="8" width="3" height="8" rx="1.500"/><rect x="18.500" y="8" width="3" height="8" rx="1.500"/></g></svg>Ladybug_Construct Time</p>
    <p><svg viewBox="0 0 24 24"><path fill="#b3202c" d="M7 1h5v5H7z"/><path fill="#f2602a" d="M7 7h5v5H7z"/><path fill="#35aee2" d="M7 12h5v6H7z"/><path fill="#1b6fb5" d="M7 18h5v5H7z"/><text x="14.500" y="5.500" class="scale-n">3</text><text x="14.500" y="11.500" class="scale-n">2</text><text x="14.500" y="17.500" class="scale-n">1</text><text x="14.500" y="23" class="scale-n">0</text></svg>Ladybug_Create Legend</p>
    <p><span class="conv"><i>L</i><b>G</b></span>Ladybug_L2G</p>
    <p><span class="conv pale"><i class="stack">l<br>x</i><b class="stack">f<br>c</b></span>Ladybug_lux2ft-cd</p>
    <p><span class="conv pale"><i class="stack">m³<br>s</i><b class="stack">f³<br>m</b></span>Ladybug_M3s2Cfm</p>
    <p><svg viewBox="0 0 24 24"><path d="M1 2h22v20H1z" fill="#87a5dd" stroke="#222"/><path d="M23 2v20l-7-6V8z" fill="#e25b3f"/><path d="M8 8h8v8H8z" fill="#e9a898" stroke="#222"/><path d="M1 2l7 6M23 2l-7 6M1 22l7-6M23 22l-7-6" stroke="#222"/><circle cx="12" cy="9.500" r="1.800"/><path d="M10 12h4v7h-4z"/></svg>Ladybug_MRT Calculator</p>
    <p><span class="conv"><i class="stack">m<br>s</i><b class="stack">m<br>ph</b></span>Ladybug_ms2mph</p>
    <p><svg viewBox="0 0 24 24"><path d="M3 7h4l2-3h6l2 3h4v13H3z"/><circle cx="12" cy="12.500" r="4.500" fill="#234" stroke="#6ad" stroke-width="1.300"/><path d="M12 0v6M12 19v5M0 12h6M18 12h6" stroke="#e22" stroke-width="1.300" stroke-dasharray="3 1"/></svg>Ladybug_Orient to Camera</p>
    <p><svg viewBox="0 0 24 24"><circle cx="12" cy="12" r="8.500" fill="#f4f4f4" stroke="#222" stroke-width="4"/><path d="M3.800 10a8.500 8.500 0 0 1 16.400 0" fill="none" stroke="#7ab0e0" stroke-width="2.400"/><path d="M3.500 12a8.500 8.500 0 0 0 9 8.500" fill="none" stroke="#e55" stroke-width="2.400"/><path d="M12 0v24M0 12h24" stroke="#111" stroke-dasharray="3 1"/><text x="11" y="18" class="glyph-p">P</text></svg>Ladybug_Orientation Study Parameters</p>
    <p><svg viewBox="0 0 24 24"><use href="#grid4" width="24" height="24"/><text x="11" y="22" class="glyph-p">P</text></svg>Ladybug_Passive Strategy Parameters</p>
    <p><span class="conv pale"><i>R</i><b>R</b></span>Ladybug_rIP2rSI</p>
    <p><svg viewBox="0 0 24 24"><g fill="none" stroke-width="1.700"><path d="M9 9L1 1M1 6V1h5M4 13l8-8" stroke="#2a3f9a"/><path d="M15 9l8-8M18 1h5v5M12 5l8 8" stroke="#8a5a3a"/><path d="M9 15l-8 8M1 18v5h5M4 12l8 8" stroke="#f0502a"/><path d="M15 15l8 8M18 23h5v-5M12 20l8-8" stroke="#1d9a50"/></g></svg>Ladybug_Separate By Normal</p>
    <p><svg viewBox="0 0 24 24"><path d="M1 18A10 9 0 0 1 20 18z" fill="#2aa8e0" stroke="#124"/><path d="M8 2q9-1 15 6l-10 7z" fill="#fe2" stroke="#222"/><path d="M0 18.500h24" stroke="#124" stroke-dasharray="3 1"/></svg>Ladybug_Set the View</p>
    <p><svg viewBox="0 0 24 24"><path d="M1 1h22v22H1z" fill="#1b1b1b" stroke="#444" stroke-dasharray="2 1"/><path d="M4 7h12v15H4z" fill="#2aa8e0"/><text x="11" y="21.500" class="glyph-p">P</text></svg>Ladybug_Shading Parameters List</p>
    <p><span class="conv pale"><i>U</i><b>U</b></span>Ladybug_uIP2uSI</p>
    <p><span class="conv"><b>U</b><i>U</i></span>Ladybug_uSI2uIP</p>
    <p><span class="conv"><i>W</i><b>B</b></span>Ladybug_Wh2BTU</p>
    <p><span class="conv"><i>W</i><b>B</b></span>Ladybug_Whm2BTUft</p>
  </div>
</aside>

<svg class="markup" viewBox="0 0 1366 768">
  <path d="M931 76C922 92 917 102 906 113C900 119 892 123 866 134.500C852 141 840 145 829 148C800 158 770 173 747 181C715 191 675 199 650 207C630 214 605 226 583 233.500C550 243 520 250 500 258C478 264 456 275 440 282C425 289 417 292 410 299C402 307 397 316 393 323C385 337 378 352 373 367C365 390 361 415 357 440L352 471"/>
  <path d="M885 91C905 89 922 82 932 74C938 76 942 91 949 102C954 110 957 113 962 116"/>
  <path d="M337 443L346 486Q347 492 356 487C368 480 380 469 390 460"/>
</svg>

<footer class="taskbar">
  <div class="start"><svg viewBox="0 0 16 16"><path d="M0 2.300L6.500 1.400V7.600H0zM7.300 1.300L16 0V7.600H7.300zM0 8.400h6.500v6.200L0 13.700zM7.300 8.400H16V16l-8.700-1.300z" fill="#fff"/></svg></div>
  <div class="apps">
    <span class="run"><svg viewBox="0 0 20 20"><path d="M3 3q1 2 3 1 3-3 5-4-1 3 3 4l2-2q4 5 2 10a8 8 0 0 1-15 1Q0 8 3 3z" fill="url(#gFox)"/><circle cx="10" cy="11" r="4" fill="#8143c8"/><path d="M6 8q4 0 5 2-3 0-3 3-3-1-2-5z" fill="#ff9a2e"/></svg></span>
    <span><svg viewBox="0 0 20 20"><path d="M2 2h16v12H2z" fill="#3fb3f5" stroke="#cfeaff"/><path d="M2 14L18 2v12z" fill="#6cc9fa"/><path d="M7 16h6M2 18h16" stroke="#dfe8ee" stroke-width="1.500"/></svg></span>
    <span class="run active"><svg viewBox="0 0 20 20"><path d="M0 0h20v20H0z" fill="#050505"/><path d="M1 1l3 7 3 7 4 4 5-2 3-3-2-4-4 3-3-3-2-5-3-4 1 5z" fill="#eee"/><path d="M6 8l4 6" stroke="#222"/><text x="13" y="8.500" class="rhino-6">6</text></svg></span>
    <span class="run"><svg viewBox="0 0 20 20"><path d="M14 0l5 2v16l-5 2z" fill="#29a3ee"/><path d="M14 1L1 13l2 2L15 6zM14 19L1 7l2-2 12 9z" fill="#1583d0"/></svg></span>
    <span class="run multi"><svg viewBox="0 0 20 20"><path d="M0 2h8l2 3h10v14H0z" fill="#f0b429"/><path d="M0 6h20v12H0z" fill="#fbd86b"/><path d="M4 19v-8h12v8h-3v-4H7v4z" fill="#3d9be0"/></svg></span>
    <span class="run"><svg viewBox="0 0 20 20"><path d="M1 14l9-7H3V5h8L8 3l2-1 8 6q4 6-2 9t-9-3H4z" fill="#ee7e1a"/><circle cx="12.500" cy="11.500" r="4" fill="#fff"/><circle cx="12.500" cy="11.500" r="2" fill="#265787"/></svg></span>
    <span class="run"><svg viewBox="0 0 20 20"><path d="M2 2h16v17l-3-2H2z" fill="#7289c9"/><path d="M5 13l1-6q4-2 8 0l1 6-2 1-1-1H8l-1 1z" fill="#fff"/><circle cx="8" cy="10.500" r="1.200" fill="#7289c9"/><circle cx="12" cy="10.500" r="1.200" fill="#7289c9"/></svg></span>
    <span class="run"><svg viewBox="0 0 20 20"><path d="M0 0h20v20H0z" fill="#3a92e4"/><path d="M0 14l7-7 13 12v1H0z" fill="#123f78"/><path d="M9 20l6-7 5 4v3z" fill="#0a2c58"/><circle cx="14" cy="5" r="1.800" fill="#fff"/></svg></span>
  </div>
  <div class="tray">
    <svg class="t-up" viewBox="0 0 12 7"><path d="M1 6l5-5 5 5" fill="none" stroke="#eee" stroke-width="1.200"/></svg>
    <svg class="t-wifi" viewBox="0 0 14 14"><g fill="none" stroke="#ddd" stroke-width="1.100"><path d="M1 13A12 12 0 0 1 13 1M4 13A9 9 0 0 1 13 4M7 13A6 6 0 0 1 13 7"/></g><circle cx="11" cy="11.500" r="2" fill="#eee"/></svg>
    <svg class="t-vol" viewBox="0 0 18 14"><path d="M1 5h3l4-4v12L4 9H1z" fill="none" stroke="#eee"/><path d="M10 5q1.500 2 0 4M12.500 3q3 4 0 8M15 1q4 6 0 12" fill="none" stroke="#eee"/></svg>
    <svg class="t-box" viewBox="0 0 16 14"><path d="M4 0l4 2.500L4 5 0 2.500zM12 0l4 2.500L12 5 8 2.500zM4 5l4 2.500L4 10 0 7.500zM12 5l4 2.500L12 10 8 7.500zM8 9l4 2.300L8 14l-4-2.700z" fill="#eee"/></svg>
    <div class="clock">19:41:48<br>seg 05 out</div>
    <svg class="t-note" viewBox="0 0 16 16"><path d="M0 0h16v12h-5l-3 3.500V12H0z" fill="#fff"/><path d="M3 3.500h10M3 6h10M3 8.500h7" stroke="#222"/></svg>
    <i class="peek"></i>
  </div>
</footer>
</main>
</body>
</html>
```

FILE: styles.css
```css
* { box-sizing: border-box; }
body { margin: 0; overflow: hidden; font-family: "Open Sans", "Noto Sans", sans-serif; }
p { margin: 0; }
svg { display: block; flex: none; }
.defs { position: absolute; }
.screen { position: relative; width: 1366px; height: 768px; overflow: hidden; display: grid; grid-template-rows: 738px 30px; background: #f0f0f0; }
.window { width: 868px; height: 738px; overflow: hidden; display: flex; flex-direction: column; }
.window > * { flex: none; }

.titlebar { height: 23px; padding: 2px 0 0 2px; background: #fff; color: #8c8c8c; font-size: 13px; line-height: 20px; letter-spacing: -.25px; }
.menubar { height: 27px; padding-left: 13px; background: linear-gradient(90deg, #f0f0f0, #f8f8f8 700px); display: flex; color: #000; font-size: 12px; line-height: 27px; letter-spacing: -.28px; white-space: nowrap; }
.menubar span { flex: none; }
.tabs { height: 23px; padding-left: 8px; display: flex; border-bottom: 1px solid #a9a9a9; background: #f0f0f0; font: 12px/24px "Liberation Sans", sans-serif; color: #6e6e6e; white-space: nowrap; }
.tabs span { flex: none; letter-spacing: -.32px; }
.tab-on { flex: none; width: 72px; height: 23px; margin: 0 8px 0 0; border: 1px solid #999; border-bottom: 0; border-radius: 6px 6px 0 0; background: linear-gradient(#eee, #fff); text-align: center; font-weight: 400; line-height: 19px; letter-spacing: -.5px; color: #111; }

.ribbon { height: 86px; padding: 2px 0 0 3px; display: flex; gap: 4px; background: #f0f0f0; }
.panel { flex: none; height: 73px; border: 1px solid #6f6f6f; border-radius: 5px; background: linear-gradient(#cfcfcf, #e4e4e4 25%, #dcdcdc); box-shadow: inset 0 1px 0 #f5f5f5; overflow: hidden; display: flex; flex-direction: column; }
.panel-body { flex: 1; padding: 1px 1px 0; display: flex; }
.cells { display: grid; grid-template-columns: 28px; grid-auto-rows: 28px; place-items: center; }
.cells.two { grid-template-columns: 28px 28px; }
.cells.three { grid-template-columns: 28px 28px 28px; }
.cells svg { width: 23px; height: 23px; }
.rule { width: 10px; background: linear-gradient(transparent, #aaa, transparent) 4px 0 / 1px 56px no-repeat; }
.panel footer { position: relative; height: 14px; background: linear-gradient(#303030, #161616); color: #f2f2f2; font: 11px/13px "Liberation Sans", sans-serif; letter-spacing: -.25px; text-align: center; padding-right: 10px; }
.panel footer em { position: absolute; right: 1px; top: 0; color: #999; font: 10px/13px "DejaVu Sans", sans-serif; }
.panel.cut { width: 60px; }

.slab { font: 700 13px "Liberation Mono", monospace; }
.slab.small { font-size: 11.500px; }
.slab.mid { font-size: 11px; }
.slab.dig { font-size: 12.500px; }
.tiny-mono { font: 6px "Liberation Mono", monospace; fill: #500; }
.tiny-mono.big { font-size: 9px; }
.stat-text { font: 700 7.500px "Liberation Mono", monospace; fill: #eee; }
.glyph-p { font: 700 17px "Liberation Serif", serif; fill: #fff; stroke: #111; stroke-width: 2.400px; paint-order: stroke; stroke-linejoin: round; }
.compass-n { font: 700 7px "Liberation Sans", sans-serif; fill: #fff; }
.scale-n { font: 6px "Liberation Mono", monospace; }
.rhino-6 { font: 700 10px "Open Sans", sans-serif; fill: #fff; }

.toolbar { height: 33px; border-top: 2px solid #7c7c7c; border-left: 2px solid #909090; background: linear-gradient(#fdfdfd, #f0f0f0); display: flex; align-items: center; padding: 0 0 1px 4px; }
.tool-open { width: 20px; height: 24px; margin-right: 9px; }
.tool-save { width: 23px; height: 23px; }
.tool-rule { width: 1px; height: 20px; margin: 0 4px 0 7px; background: #bbb; }
.zoom-box { width: 136px; height: 23px; border: 1px solid #7a7a7a; background: #fff; display: flex; align-items: center; justify-content: space-between; padding: 0 3px; font-size: 12px; letter-spacing: -.5px; }
.zoom-box svg { width: 10px; height: 6px; }
.tool-fit { width: 24px; height: 24px; margin: 0 5px 0 5px; }
.caret { border: 3px solid transparent; border-top-color: #111; border-bottom: 0; }
.tool-eye { width: 23px; height: 19px; margin: 0 5px 0 7px; }
.tool-pen { width: 22px; height: 22px; margin-left: 7px; }

.canvas { position: relative; height: 522px; border-left: 2px solid #8a8a88; overflow: hidden;
  background: linear-gradient(90deg, #bdb9b1 1px, transparent 1px) 122px 0 / 150px 50px, linear-gradient(#bdb9b1 1px, transparent 1px) 0 46px / 150px 50px, #d4d0c8; }
.wires { position: absolute; left: -2px; top: 0; width: 868px; height: 522px; }
.wire path { fill: none; stroke: #56544f; stroke-width: 3; }
.ports circle { fill: #fff; stroke: #000; stroke-width: 2; }
.node { position: absolute; z-index: 1; border: 1px solid #111; border-radius: 3px; font-size: 11px; letter-spacing: -.26px; color: #111; }
.node p { height: 20px; line-height: 20px; white-space: nowrap; }
.node .dash { letter-spacing: .68px; margin-right: -1px; }
.stub { left: -8px; top: -20px; width: 89px; height: 26px; background: #d2d0cc; }
.toggle { left: -30px; top: 79px; width: 120px; height: 22px; background: linear-gradient(#e8e6ec, #a9a6b5); display: flex; justify-content: flex-end; align-items: center; gap: 10px; padding-right: 1px; }
.toggle span { line-height: 18px; padding-bottom: 2px; letter-spacing: .1px; }
.toggle b { width: 48px; height: 18px; border: 1px solid #000; border-radius: 2px; box-shadow: inset 0 0 0 1px #777; background: #3b3b3b; color: #fff; text-align: center; font: 700 13px/15px "Liberation Mono", monospace; letter-spacing: 0; }
.comfort { left: 123px; top: -30px; width: 329px; height: 139px; background: linear-gradient(#a09dae, #9b98a9 60%, #8d8a9a); display: flex; justify-content: space-between; padding: 35px 16px 0 16px; }
.comfort .inputs { width: 123px; padding-top: 11px; display: flex; flex-direction: column; align-items: flex-end; }
.comfort .inputs p { height: 31px; }
.comfort .outputs { width: 139px; }
.comfort .outputs .dash { height: 19px; }
.half-icon { width: 24px; height: 7px; margin: -6px 0 0 6px; }
.ver { position: absolute; height: 29px; border-radius: 0 0 4px 4px; background: #222; color: #eee; font-size: 11px; line-height: 14px; letter-spacing: -.2px; text-align: center; }
.ver-comfort { left: 129px; top: 108px; width: 317px; height: 30px; }
.slider { width: 204px; height: 20px; display: flex; background: #eee; overflow: hidden; }
.slider b { width: 83px; border-right: 1px solid #111; background: linear-gradient(#c8c5d2, #9996a8); font-weight: 400; line-height: 16px; text-align: center; letter-spacing: 0; white-space: nowrap; }
.track { flex: 1; display: flex; align-items: center; gap: 4px; background: repeating-linear-gradient(90deg, #b5b5b5 0 1px, transparent 1px 10px) 9px 5px / 104px 5px no-repeat, linear-gradient(#b5b5b5, #b5b5b5) 9px 9px / 104px 1px no-repeat, linear-gradient(#fbfbfb, #d2d2d2); }
.track span { line-height: 14px; padding-bottom: 2px; }
.knob { width: 8px; height: 8px; border: 2px solid #000; border-radius: 50%; background: #fff; }
.knob.diamond { width: 6px; height: 6px; margin-left: 2px; border-width: 1px; border-radius: 0; transform: rotate(45deg); }
.s1 { left: 177px; top: 156px; } .s1 .track { padding-left: 54px; }
.s2 { left: 178px; top: 176px; } .s2 .track { padding-left: 47px; }
.s3 { left: 180px; top: 216px; } .s3 .track { padding-left: 94px; }
.mannequin { left: 530px; top: 134px; width: 243px; height: 185px; background: linear-gradient(#fff, #f4f4f4 8px, #e3e3e3 9px, #c4c4c4); display: flex; }
.mannequin .inputs { width: 117px; display: flex; flex-direction: column; align-items: flex-end; }
.mannequin .node-icon { width: 24px; height: 24px; margin: 79px 4px 0 5px; }
.mannequin .outputs { padding-top: 20px; letter-spacing: -.15px; }
.mannequin .outputs p { height: 60px; }
.ver-mannequin { left: 536px; top: 318px; width: 231px; height: 30px; background: #333; }
.legend { left: 200px; top: 263px; width: 202px; height: 205px; background: linear-gradient(#c9f0a8, #9be066 7px, #6ed526 8px, #4db30b); display: flex; }
.legend .inputs { width: 108px; text-align: right; }
.legend .inputs p { color: #0c2a00; }
.legend .node-icon { width: 24px; height: 24px; margin: 90px 5px 0 4px; }
.legend .outputs { padding-top: 90px; }
.flatten { position: absolute; left: 2px; top: 63px; width: 15px; height: 15px; }
.ver-legend { left: 206px; top: 467px; width: 190px; height: 30px; background: #002000; }
.palette { position: absolute; left: 0; top: 494px; width: 147px; height: 28px; border: 1px solid #000; background: linear-gradient(90deg, transparent 140px, #777 140px), linear-gradient(#ccc, #eee 50%, #aaa 52%, #bbb); display: flex; align-items: center; gap: 4px; padding-left: 1px; }
.palette svg { width: 24px; height: 24px; }
.status { height: 24px; border-top: 2px solid #fff; box-shadow: inset 0 1px #ccc; padding-left: 7px; font: 11px/26px "Liberation Sans", sans-serif; }

.popup { position: absolute; left: 868px; top: 0; width: 498px; height: 738px; border: 1px solid #777; border-bottom-color: #555; background: #f0f0f0; overflow: hidden; font: 12px "Liberation Sans", sans-serif; letter-spacing: -.46px; color: #111; }
.popup header { height: 13px; margin-bottom: 1px; background: #191919; display: grid; grid-template-columns: 247px 1fr; color: #777; text-align: center; font-size: 11px; line-height: 13px; letter-spacing: 0; }
.popup header span { transform: scaleY(-1); }
.popup header em { padding-left: 0; text-align: left; font: 10px/12px "DejaVu Sans", sans-serif; color: #555; }
.group { display: grid; grid-template-columns: 248px 248px; grid-auto-rows: 26px; padding-bottom: 10px; background: linear-gradient(90deg, #f0f0f0 30px, #c4c4c4 120px, #c4c4c4 300px, #f0f0f0 460px) 0 calc(100% - 5px) / 100% 1px no-repeat; }
.group p { display: flex; align-items: center; gap: 9px; padding: 0 0 0 1px; white-space: nowrap; }
.group p > svg { width: 24px; height: 24px; }
.hot { background: #a9b3ca; }
.conv { flex: none; width: 24px; height: 18px; display: flex; font: 700 11px/17px "Liberation Mono", monospace; letter-spacing: 0; text-align: center; }
.conv i, .conv b { width: 12px; border: 1px dashed #5d1014; border-radius: 2px; font-style: normal; }
.conv b { background: #e2232b; color: #300; }
.conv i { background: #f1999c; border-color: #b78; color: #a55; }
.conv.pale i { background: #f0cccc; border-color: #dbb; color: #c99; }
.conv .stack { font-size: 8px; line-height: 8px; letter-spacing: -1px; }

.markup { position: absolute; z-index: 2; left: 0; top: 0; width: 1366px; height: 768px; pointer-events: none; }
.markup path { fill: none; stroke: #e3201c; stroke-width: 5.500; stroke-linecap: round; stroke-linejoin: round; }

.taskbar { background: #101010; display: flex; color: #eee; }
.start { width: 537px; padding: 7px 0 0 10px; }
.start svg { width: 16px; height: 16px; }
.apps { display: flex; width: 616px; }
.apps span { width: 37px; height: 30px; padding: 6px 0 0 9px; }
.apps svg { width: 18px; height: 18px; }
.run { background: linear-gradient(#76b9ed, #76b9ed) 4px 28px / 28px 2px no-repeat; }
.run.active { background: linear-gradient(#76b9ed, #76b9ed) 0 28px / 36px 2px no-repeat, linear-gradient(#343434, #343434) 0 0 / 36px 30px no-repeat; }
.multi { background: linear-gradient(90deg, #76b9ed 19px, #4b7da5 19px) 4px 28px / 28px 2px no-repeat; }
.tray { flex: 1; display: flex; align-items: center; padding-left: 4px; }
.t-up { width: 12px; height: 7px; margin-right: 12px; }
.t-wifi { width: 14px; height: 14px; margin-right: 8px; }
.t-vol { width: 18px; height: 14px; margin-right: 6px; }
.t-box { width: 16px; height: 14px; }
.clock { width: 70px; margin-left: 2px; text-align: center; font-size: 12px; line-height: 14px; letter-spacing: -.4px; white-space: nowrap; }
.t-note { width: 16px; height: 16px; margin-left: 10px; }
.peek { width: 1px; height: 30px; margin-left: 20px; background: #555; }
```
